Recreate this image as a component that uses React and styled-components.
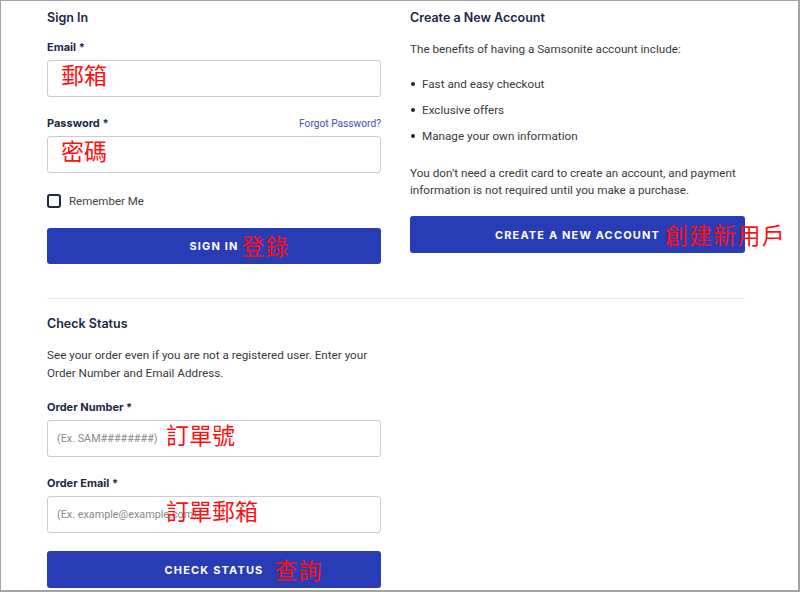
import React from "react";
import styled, { createGlobalStyle } from "styled-components";

const GlobalStyle = createGlobalStyle`
  html, body {
    margin: 0;
    padding: 0;
    background: #ffffff;
  }
  * {
    box-sizing: border-box;
  }
`;

const Frame = styled.div`
  width: 800px;
  height: 592px;
  background: #ffffff;
  border: 1px solid #a3a3a3;
  border-right-width: 2px;
  border-bottom-width: 2px;
  padding: 9px 0 0 46px;
  overflow: hidden;
  font-family: Roboto, "Liberation Sans", sans-serif;
  color: #3d3d3d;
`;

const Inner = styled.div`
  width: 698px;
`;

const Columns = styled.div`
  display: grid;
  grid-template-columns: 334px 335px;
  column-gap: 29px;
  align-items: start;
`;

const Column = styled.section`
  display: flex;
  flex-direction: column;
`;

const Heading = styled.h2`
  margin: 0;
  font-family: Inter, "Liberation Sans", sans-serif;
  font-size: 12.5px;
  font-weight: 600;
  line-height: 16px;
  color: #1d2747;
`;

const Text = styled.p`
  margin: ${(p) => p.$top || 0}px 0 0;
  font-size: 11.7px;
  line-height: ${(p) => p.$lh || 18}px;
  color: #3a3a3a;
`;

const FieldGroup = styled.div`
  margin-top: ${(p) => p.$top}px;
  display: flex;
  flex-direction: column;
`;

const LabelRow = styled.div`
  display: flex;
  justify-content: space-between;
  align-items: center;
  height: 14px;
  margin-bottom: 6px;
`;

const Label = styled.label`
  font-family: Inter, "Liberation Sans", sans-serif;
  font-size: 11px;
  font-weight: 700;
  color: #1d2747;
`;

const Link = styled.a`
  font-size: 10.2px;
  color: #3d52b5;
  text-decoration: none;
`;

const InputBox = styled.div`
  position: relative;
  height: 37px;
  border: 1px solid #c9cbdc;
  border-radius: 3px;
  background: #ffffff;
  display: flex;
  align-items: center;
  padding-left: 9px;
`;

const Placeholder = styled.span`
  font-size: 10.8px;
  color: #8a8a8a;
`;

const Note = styled.span`
  position: absolute;
  left: ${(p) => p.$left}px;
  top: 50%;
  transform: translateY(-68%);
  font-family: "Noto Sans CJK TC", "Noto Sans CJK SC", sans-serif;
  font-size: 23px;
  font-weight: 400;
  line-height: 1;
  color: #ff1010;
  white-space: nowrap;
`;

const CheckRow = styled.label`
  margin-top: 21px;
  display: flex;
  align-items: center;
  gap: 8px;
  font-size: 11.5px;
  color: #444444;
`;

const Box = styled.span`
  width: 14px;
  height: 14px;
  border: 2px solid #1d2747;
  border-radius: 3px;
  background: #ffffff;
`;

const Button = styled.button`
  margin-top: ${(p) => p.$top}px;
  height: ${(p) => p.$h || 37}px;
  width: 100%;
  border: none;
  border-radius: 3px;
  background: #283cb6;
  display: flex;
  align-items: center;
  justify-content: center;
  cursor: pointer;
  padding: 0;
`;

const ButtonLabel = styled.span`
  position: relative;
  font-family: Inter, "Liberation Sans", sans-serif;
  font-size: 11px;
  font-weight: 700;
  letter-spacing: 1.15px;
  color: #ffffff;
`;

const ButtonNote = styled(Note)`
  left: calc(100% + ${(p) => p.$gap}px);
  transform: translateY(-52%);
`;

const BulletList = styled.ul`
  list-style: none;
  margin: 17px 0 0;
  padding: 0;
`;

const Bullet = styled.li`
  position: relative;
  padding-left: 12px;
  font-size: 11.7px;
  line-height: 18px;
  margin-bottom: 8px;
  color: #3a3a3a;

  &::before {
    content: "";
    position: absolute;
    left: 1px;
    top: 7px;
    width: 4px;
    height: 4px;
    border-radius: 50%;
    background: #222222;
  }

  &:last-child {
    margin-bottom: 0;
  }
`;

const Divider = styled.hr`
  margin: 34px 0 0;
  border: none;
  border-top: 1px solid #e6e6ea;
  width: 698px;
`;

const StatusSection = styled.section`
  width: 334px;
  margin-top: 17px;
  display: flex;
  flex-direction: column;
`;

const Field = ({ label, top, extra, placeholder, note, noteLeft }) => (
  <FieldGroup $top={top}>
    <LabelRow>
      <Label>{label} *</Label>
      {extra}
    </LabelRow>
    <InputBox>
      {placeholder && <Placeholder>{placeholder}</Placeholder>}
      {note && <Note $left={noteLeft}>{note}</Note>}
    </InputBox>
  </FieldGroup>
);

const ActionButton = ({ top, h, children, note, gap }) => (
  <Button $top={top} $h={h}>
    <ButtonLabel>
      {children}
      <ButtonNote $gap={gap}>{note}</ButtonNote>
    </ButtonLabel>
  </Button>
);

export default function App() {
  return (
    <>
      <GlobalStyle />
      <Frame>
        <Inner>
          <Columns>
            <Column>
              <Heading>Sign In</Heading>
              <Field label="Email" top={14} note="郵箱" noteLeft={13} />
              <Field
                label="Password"
                top={19}
                note="密碼"
                noteLeft={13}
                extra={<Link href="#">Forgot Password?</Link>}
              />
              <CheckRow>
                <Box />
                Remember Me
              </CheckRow>
              <ActionButton top={20} h={36} note="登錄" gap={3}>
                SIGN IN
              </ActionButton>
            </Column>
            <Column>
              <Heading>Create a New Account</Heading>
              <Text $top={14}>
                The benefits of having a Samsonite account include:
              </Text>
              <BulletList>
                <Bullet>Fast and easy checkout</Bullet>
                <Bullet>Exclusive offers</Bullet>
                <Bullet>Manage your own information</Bullet>
              </BulletList>
              <Text $top={20} $lh={17}>
                You don’t need a credit card to create an account, and payment
                information is not required until you make a purchase.
              </Text>
              <ActionButton top={17} note="創建新用戶" gap={5}>
                CREATE A NEW ACCOUNT
              </ActionButton>
            </Column>
          </Columns>
          <Divider />
          <StatusSection>
            <Heading>Check Status</Heading>
            <Text $top={14}>
              See your order even if you are not a registered user. Enter your
              Order Number and Email Address.
            </Text>
            <Field
              label="Order Number"
              top={18}
              placeholder="(Ex. SAM########)"
              note="訂單號"
              noteLeft={118}
            />
            <Field
              label="Order Email"
              top={19}
              placeholder="(Ex. example@example.com)"
              note="訂單郵箱"
              noteLeft={118}
            />
            <ActionButton top={18} note="查詢" gap={11}>
              CHECK STATUS
            </ActionButton>
          </StatusSection>
        </Inner>
      </Frame>
    </>
  );
}
